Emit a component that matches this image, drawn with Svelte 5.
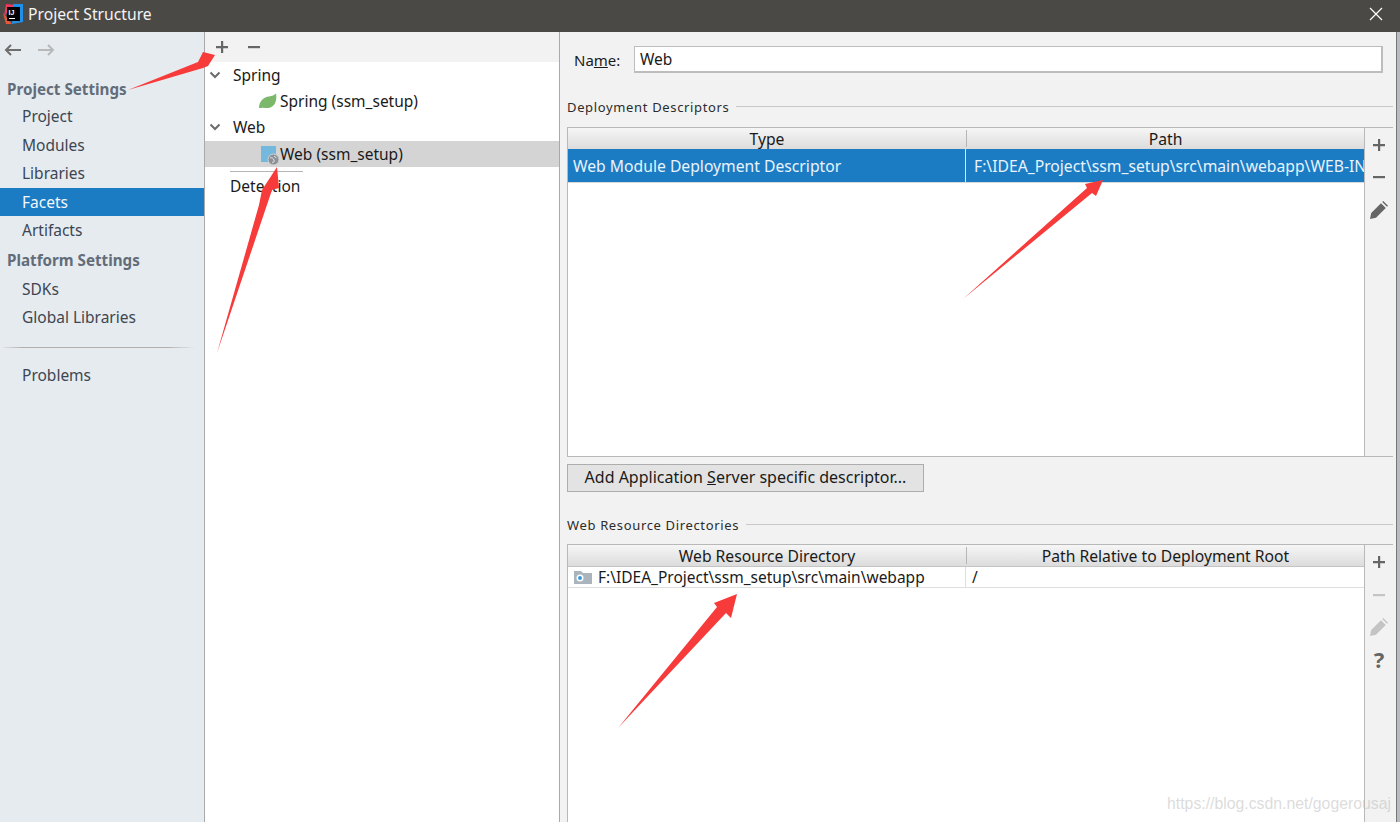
<script>
  const nav1 = ['Project', 'Modules', 'Libraries', 'Facets', 'Artifacts'];
  const nav2 = ['SDKs', 'Global Libraries'];
</script>

{#snippet plus(cls = '')}
  <svg class="ic {cls}" viewBox="0 0 16 16" width="16" height="16"><path d="M7 2h2.200v5H14v2.200H9.200V14H7V9.200H2V7h5z" /></svg>
{/snippet}
{#snippet minus(cls = '')}
  <svg class="ic {cls}" viewBox="0 0 16 16" width="16" height="16"><path d="M2 7h12v2.200H2z" /></svg>
{/snippet}
{#snippet pencil(cls = '')}
  <svg class="ic {cls}" viewBox="0 0 18 18" width="18" height="18"><path d="M0 18l1.200-6L11 2.200l4.800 4.800L6 16.800zM12.200 1l1-1L18 4.800l-1 1z" /></svg>
{/snippet}
{#snippet chev()}
  <svg class="chev" viewBox="0 0 12 8" width="12" height="8"><path d="M1.500 1.500L6 6l4.500-4.500" /></svg>
{/snippet}

<div class="window">
  <header class="title">
    <svg class="logo" viewBox="0 0 20 20" width="20" height="20">
      <path d="M3 0l9 1L1 12z" fill="#f0375c" />
      <path d="M0 9l9 11H3z" fill="#e8563a" />
      <path d="M10 0h10v18l-11 2z" fill="#1f8fe8" />
      <path d="M4 3h13v14H4z" fill="#000" />
      <path d="M6 14h6v1H6z" fill="#fff" />
      <text x="5.500" y="11" class="logotext">IJ</text>
    </svg>
    <span class="title-text">Project Structure</span>
    <svg class="close" viewBox="0 0 14 14" width="14" height="14"><path d="M1 1l12 12M13 1L1 13" /></svg>
  </header>

  <div class="body">
    <aside class="sidebar">
      <div class="nav-arrows">
        <svg viewBox="0 0 18 14" width="18" height="14"><path class="back" d="M17 7H2M7 2L2 7l5 5" /></svg>
        <svg viewBox="0 0 18 14" width="18" height="14"><path class="fwd" d="M1 7h15M11 2l5 5-5 5" /></svg>
      </div>
      <h3 class="first">Project Settings</h3>
      {#each nav1 as n}
        <div class="nav" class:active={n === 'Facets'}>{n}</div>
      {/each}
      <h3>Platform Settings</h3>
      {#each nav2 as n}
        <div class="nav">{n}</div>
      {/each}
      <div class="divider"></div>
      <div class="nav">Problems</div>
    </aside>

    <section class="middle">
      <div class="mid-tools">
        {@render plus()}
        {@render minus()}
      </div>
      <div class="tree">
        <div class="row group">{@render chev()}<span>Spring</span></div>
        <div class="row child">
          <svg class="ticon" viewBox="0 0 18 16" width="18" height="16"><path d="M0 15C0 8 5 4 10 3.500c3-.3 5.500-1.500 7-3 1.500 8-2 14.500-8 14.500-3 0-5-.8-7 0z" fill="#7cb86c" /></svg>
          <span>Spring (ssm_setup)</span>
        </div>
        <div class="row group">{@render chev()}<span>Web</span></div>
        <div class="row child selected">
          <svg class="ticon" viewBox="0 0 20 20" width="20" height="20">
            <rect x="0" y="0" width="15" height="16" fill="#75b8de" />
            <circle cx="12.500" cy="13.500" r="5.500" fill="#8b9097" stroke="#d4d4d4" stroke-width="1" />
            <path d="M9 12c2-1 3 0 4 2s-1 3-2 2M13 10l2.500 2" fill="none" stroke="#e4e6e8" stroke-width="1" />
          </svg>
          <span>Web (ssm_setup)</span>
        </div>
        <div class="detect">Detection</div>
      </div>
    </section>

    <main class="right">
      <div class="name-row">
        <label for="nm">Na<u>m</u>e:</label>
        <input id="nm" value="Web" />
      </div>

      <div class="legend first-legend"><span>Deployment Descriptors</span><i></i></div>
      <div class="panel p1">
        <div class="table">
          <div class="thead"><div class="c1">Type</div><div class="c2">Path</div></div>
          <div class="trow sel">
            <div class="c1">Web Module Deployment Descriptor</div>
            <div class="c2">F:\IDEA_Project\ssm_setup\src\main\webapp\WEB-INF</div>
          </div>
        </div>
        <div class="side">
          {@render plus()}
          {@render minus()}
          {@render pencil()}
        </div>
      </div>

      <button class="add">Add Application <u>S</u>erver specific descriptor...</button>

      <div class="legend second-legend"><span>Web Resource Directories</span><i></i></div>
      <div class="panel p2">
        <div class="table">
          <div class="thead"><div class="c1">Web Resource Directory</div><div class="c2">Path Relative to Deployment Root</div></div>
          <div class="trow plain">
            <div class="c1">
              <svg viewBox="0 0 18 14" width="18" height="14"><path d="M0 1h7l2 2h9v11H0z" fill="#a9b4bd" /><circle cx="6" cy="8" r="3.500" fill="#fff" /><circle cx="6" cy="8" r="2" fill="#3a9bdc" /></svg>
              F:\IDEA_Project\ssm_setup\src\main\webapp
            </div>
            <div class="c2">/</div>
          </div>
        </div>
        <div class="side">
          {@render plus()}
          <div class="push">{@render minus('dim')}</div>
          {@render pencil('dim')}
          <span class="q">?</span>
        </div>
      </div>
    </main>

    <div class="edge"></div>
  </div>

  <div class="watermark">https://blog.csdn.net/gogerousaj</div>

  <svg class="arrows" viewBox="0 0 1400 822" width="1400" height="822">
    <path d="M128 90L198 62 203 52 215 55 208 66 203 68z" />
    <path d="M217 353L259 205 262 190 277 167 279 188 272 190z" />
    <path d="M963 299L1087 188 1085 184 1103 180 1096 196 1092 193z" />
    <path d="M618 728L717 607 714 603 737 594 731 618 726 613z" />
  </svg>
</div>

<style>
  :global(body) { margin: 0; }
  .window {
    position: relative;
    width: 1400px;
    height: 822px;
    overflow: hidden;
    font-family: "Noto Sans", "Open Sans", sans-serif;
    font-size: 15.500px;
    color: #1a1a1a;
    background: #f2f2f2;
    display: flex;
    flex-direction: column;
  }
  .title {
    height: 32px;
    flex: none;
    background: #4b4946;
    color: #f4f4f4;
    display: flex;
    align-items: center;
    padding-left: 3px;
    box-sizing: border-box;
  }
  .logo { flex: none; margin-top: -4px; }
  .logotext { font: bold 7px "Liberation Sans", sans-serif; fill: #fff; }
  .title-text { margin-left: 5px; font-size: 15.700px; margin-top: -5px; }
  .close { margin-left: auto; margin-right: 17px; margin-top: -5px; }
  .close path { stroke: #fff; stroke-width: 1.200; fill: none; }
  .body { flex: 1; display: flex; min-height: 0; }

  .sidebar {
    width: 204px;
    flex: none;
    background: #e6ebf0;
    border-right: 1px solid #a9a9a9;
    color: #3d4650;
  }
  .nav-arrows { display: flex; gap: 15px; padding: 11px 0 0 4px; height: 22px; }
  .back { stroke: #6e6e6e; stroke-width: 2; fill: none; }
  .fwd { stroke: #b8b8b8; stroke-width: 2; fill: none; }
  h3 {
    margin: 0;
    height: 30px;
    line-height: 31px;
    font-size: 15.200px;
    font-weight: 700;
    color: #626d79;
    padding-left: 7px;
  }
  h3.first { margin-top: 10px; height: 27px; line-height: 28px; }
  .nav { height: 28.500px; line-height: 28.500px; padding-left: 22px; }
  .nav.active { background: #1b7cc4; color: #f2f7fb; }
  .divider {
    height: 1px;
    margin: 15px 8px 13px 3px;
    background: linear-gradient(90deg, #e0e0e0, #b0b0b0 10%, #b0b0b0 85%, #e6ebf0);
  }

  .middle {
    width: 354px;
    flex: none;
    border-right: 1px solid #a9a9a9;
    display: flex;
    flex-direction: column;
  }
  .mid-tools {
    height: 30px;
    flex: none;
    display: flex;
    align-items: center;
    gap: 16px;
    padding-left: 9px;
    box-sizing: border-box;
  }
  .ic { fill: #666; display: block; }
  .ic.dim { fill: #c4c4c4; }
  .tree { flex: 1; background: #fff; }
  .row { height: 26.200px; display: flex; align-items: center; }
  .group { padding-left: 4px; gap: 12px; }
  .chev { flex: none; }
  .chev path { stroke: #6b6b6b; stroke-width: 2; fill: none; }
  .child { padding-left: 54px; gap: 3px; }
  .child .ticon { flex: none; }
  .selected { background: #d4d4d4; }
  .selected .ticon { margin-left: 2px; margin-top: 5px; margin-right: -4px; }
  .detect {
    margin: 4px 0 0 25px;
    width: 73px;
    border-top: 1px solid #b5b5b5;
    line-height: 28px;
    white-space: nowrap;
  }

  .right {
    flex: 1;
    min-width: 0;
    padding: 14px 3px 0 7px;
    display: flex;
    flex-direction: column;
  }
  .name-row { display: flex; align-items: center; height: 27px; padding-right: 10px; }
  .name-row label { width: 67px; padding-left: 7px; box-sizing: border-box; flex: none; font-size: 15px; }
  .name-row input {
    flex: 1;
    min-width: 0;
    height: 27px;
    box-sizing: border-box;
    border: 1px solid #bdbdbd;
    border-width: 1px 2px 2px 1px;
    background: #fff;
    padding: 0 5px;
    font: inherit;
    color: #1a1a1a;
    outline: none;
  }
  .legend {
    display: flex;
    align-items: center;
    gap: 7px;
    font-size: 13px;
    letter-spacing: 0.650px;
    height: 20px;
    color: #2c2c2c;
  }
  .legend i { flex: 1; height: 1px; background: #c8c8c8; margin-top: -2px; }
  .first-legend { margin-top: 24px; }
  .second-legend { margin-top: 23px; }
  .panel { display: flex; border: 1px solid #b8b8b8; border-right: 0; border-bottom: 0; }
  .p1 { margin-top: 10px; height: 330px; border-bottom: 1px solid #b8b8b8; box-sizing: border-box; }
  .p2 { margin-top: 9px; flex: 1; min-height: 0; }
  .table { width: 796px; flex: none; background: #fff; overflow: hidden; }
  .side {
    flex: 1;
    border-left: 1px solid #b8b8b8;
    display: flex;
    flex-direction: column;
    align-items: center;
    gap: 16px;
    padding: 9px 0 0 0;
    background: #f2f2f2;
  }
  .p2 .side { gap: 15px; padding-top: 9px; }
  .push { margin-top: 2px; }
  .q { font-size: 22px; font-weight: 700; color: #666; line-height: 20px; margin-top: -2px; }
  .thead {
    height: 21px;
    display: flex;
    background: linear-gradient(#f6f6f6, #dcdcdc);
    border-bottom: 1px solid #c4c4c4;
    text-align: center;
    box-sizing: content-box;
    font-size: 15.700px;
  }
  .thead .c1 { width: 399px; border-right: 1px solid #b5b5b5; height: 17px; margin-top: 2px; line-height: 18px; }
  .thead .c2 { line-height: 22px; }
  .c1 { width: 398px; flex: none; box-sizing: border-box; white-space: nowrap; }
  .c2 { flex: 1; min-width: 0; white-space: nowrap; overflow: hidden; }
  .trow { display: flex; }
  .sel { height: 34px; line-height: 35px; background: #1b7cc4; color: #e8f3fb; border-bottom: 1px solid #d8d8d8; box-sizing: border-box; margin-top: -1px; font-size: 15.700px; }
  .sel .c1 { padding-left: 5px; border-right: 1px solid #d8e8f3; width: 398px; }
  .sel .c2 { padding-left: 8px; }
  .plain { height: 20px; line-height: 20px; border-bottom: 1px solid #dedede; box-sizing: content-box; }
  .plain .c1 { padding-left: 6px; border-right: 1px solid #dedede; display: flex; align-items: center; gap: 6px; }
  .plain .c2 { padding-left: 6px; }

  .add {
    margin-top: 7px;
    width: 357px;
    height: 28px;
    flex: none;
    background: #e3e3e3;
    border: 1px solid #adadad;
    font: inherit;
    font-size: 16px;
    line-height: 25px;
    color: #1a1a1a;
    padding: 0 0 2px;
  }
  .edge { width: 4px; flex: none; background: #b8bcc0; border-left: 1px solid #777; box-sizing: border-box; }

  .watermark {
    position: absolute;
    right: 9px;
    bottom: 9px;
    font-family: "Liberation Sans", sans-serif;
    font-size: 15.800px;
    color: rgba(190,190,190,0.55);
  }
  .arrows { position: absolute; left: 0; top: 0; pointer-events: none; }
  .arrows path { fill: #f73b3b; }
</style>
